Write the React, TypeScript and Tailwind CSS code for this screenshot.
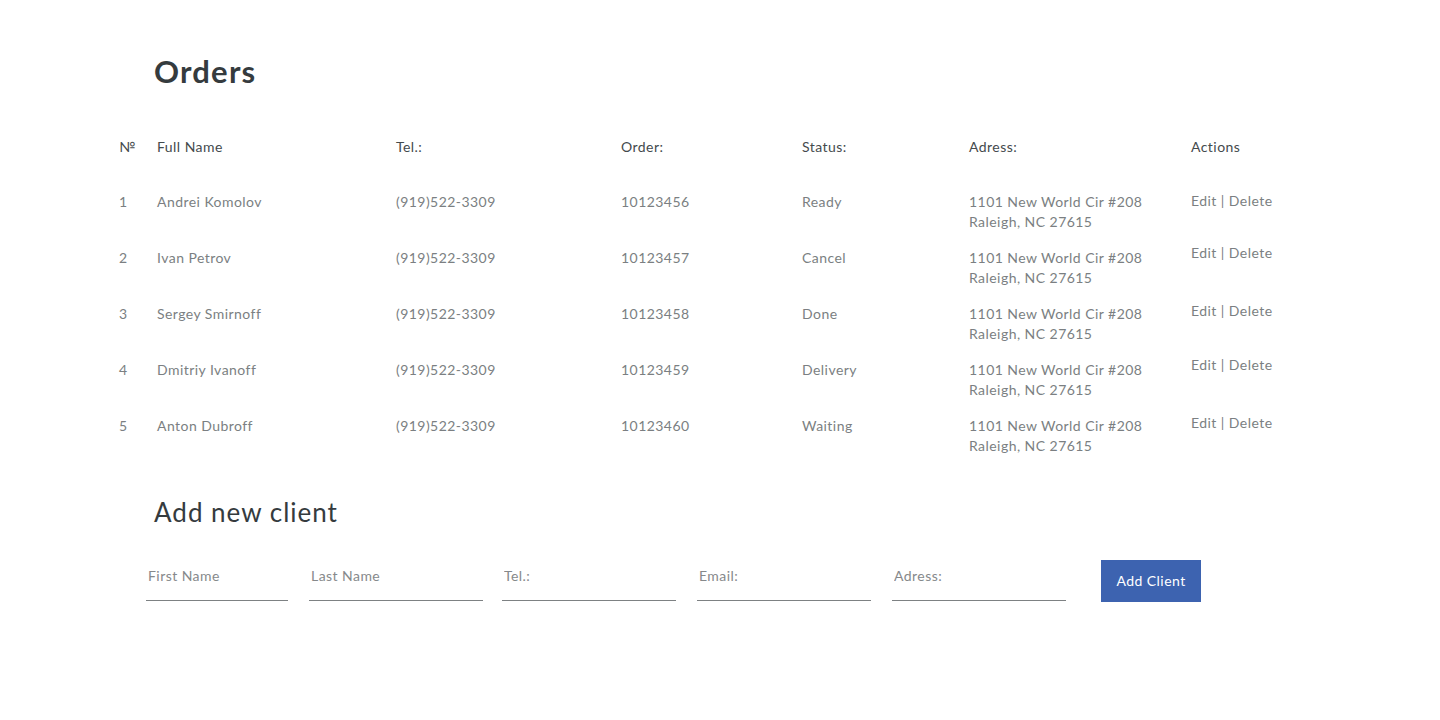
import React from 'react';

const orders = [
  { id: 1, name: 'Andrei Komolov', tel: '(919)522-3309', order: '10123456', status: 'Ready', shift: '-mt-[1px]' },
  { id: 2, name: 'Ivan Petrov', tel: '(919)522-3309', order: '10123457', status: 'Cancel', shift: '-mt-[5px]' },
  { id: 3, name: 'Sergey Smirnoff', tel: '(919)522-3309', order: '10123458', status: 'Done', shift: '-mt-[3px]' },
  { id: 4, name: 'Dmitriy Ivanoff', tel: '(919)522-3309', order: '10123459', status: 'Delivery', shift: '-mt-[5px]' },
  { id: 5, name: 'Anton Dubroff', tel: '(919)522-3309', order: '10123460', status: 'Waiting', shift: '-mt-[3px]' },
];

const cols = 'grid grid-cols-[38px_239px_225px_181px_167px_222px_120px]';
const field =
  'h-[41px] w-[174px] border-b border-[#7d8183] px-[2px] pb-[10px] text-[14px] tracking-[0.45px] text-[#555] outline-none placeholder:text-[#86898b]';

export default function App() {
  return (
    <div className="min-h-screen bg-white pt-[53px] font-['Lato','Open_Sans',sans-serif]">
      <h1 className="pl-[154px] text-[31px] leading-[36px] font-bold tracking-[1.2px] text-[#353b3e]">Orders</h1>

      {/* ===== TABLE ===== */}
      <div className="mt-[48px] pl-[119px] tracking-[0.45px]">
        <div className={`${cols} h-5 text-[14px] leading-5 text-[#444a4d]`}>
          <span>№</span>
          <span>Full Name</span>
          <span>Tel.:</span>
          <span>Order:</span>
          <span>Status:</span>
          <span>Adress:</span>
          <span>Actions</span>
        </div>

        <div className="mt-[35px]">
          {orders.map((o) => (
            <div key={o.id} className={`${cols} h-[56px] items-start text-[14px] leading-5 text-[#7b7f82]`}>
              <span>{o.id}</span>
              <span>{o.name}</span>
              <span>{o.tel}</span>
              <span>{o.order}</span>
              <span>{o.status}</span>
              <span>
                1101 New World Cir #208
                <br />
                Raleigh, NC 27615
              </span>
              <span className={o.shift}>
                <a href="#" className="hover:text-[#3d63b0]">Edit</a> | <a href="#" className="hover:text-[#3d63b0]">Delete</a>
              </span>
            </div>
          ))}
        </div>
      </div>

      {/* ===== ADD CLIENT ===== */}
      <h2 className="mt-[24px] pl-[154px] text-[26px] leading-8 tracking-[1px] text-[#353b3e]">Add new client</h2>

      <form className="mt-[32px] flex items-start pl-[146px]" onSubmit={(e) => e.preventDefault()}>
        <input placeholder="First Name" className={`${field} !w-[142px]`} />
        <input placeholder="Last Name" className={`${field} ml-[21px]`} />
        <input placeholder="Tel.:" className={`${field} ml-[19px]`} />
        <input placeholder="Email:" className={`${field} ml-[21px]`} />
        <input placeholder="Adress:" className={`${field} ml-[21px]`} />
        <button
          type="submit"
          className="ml-[35px] h-[42px] w-[100px] bg-[#3d63b0] pb-[2px] text-[14px] tracking-[0.45px] text-white hover:bg-[#34569a]"
        >
          Add Client
        </button>
      </form>
    </div>
  );
}
